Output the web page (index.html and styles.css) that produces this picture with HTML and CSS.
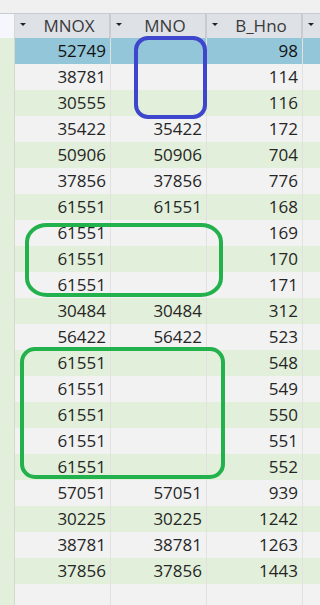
FILE: index.html
```html
<!DOCTYPE html>
<html>
<head>
<meta charset="utf-8">
<link rel="stylesheet" href="styles.css">
</head>
<body>
<div class="sheet">
  <div class="topbar"></div>
  <div class="row head">
    <div class="sel"></div>
    <div class="hc"><span class="arr"></span>MNOX</div>
    <div class="hc"><span class="arr"></span>MNO</div>
    <div class="hc"><span class="arr"></span>B_Hno</div>
    <div class="hc last"><span class="arr"></span></div>
  </div>
  <div class="row cur"><div class="sel"></div><div class="c">52749</div><div class="c"></div><div class="c">98</div><div class="c last"></div></div>
  <div class="row a"><div class="sel"></div><div class="c">38781</div><div class="c"></div><div class="c">114</div><div class="c last"></div></div>
  <div class="row b"><div class="sel"></div><div class="c">30555</div><div class="c"></div><div class="c">116</div><div class="c last"></div></div>
  <div class="row a"><div class="sel"></div><div class="c">35422</div><div class="c">35422</div><div class="c">172</div><div class="c last"></div></div>
  <div class="row b"><div class="sel"></div><div class="c">50906</div><div class="c">50906</div><div class="c">704</div><div class="c last"></div></div>
  <div class="row a"><div class="sel"></div><div class="c">37856</div><div class="c">37856</div><div class="c">776</div><div class="c last"></div></div>
  <div class="row b"><div class="sel"></div><div class="c">61551</div><div class="c">61551</div><div class="c">168</div><div class="c last"></div></div>
  <div class="row a"><div class="sel"></div><div class="c">61551</div><div class="c"></div><div class="c">169</div><div class="c last"></div></div>
  <div class="row b"><div class="sel"></div><div class="c">61551</div><div class="c"></div><div class="c">170</div><div class="c last"></div></div>
  <div class="row a"><div class="sel"></div><div class="c">61551</div><div class="c"></div><div class="c">171</div><div class="c last"></div></div>
  <div class="row b"><div class="sel"></div><div class="c">30484</div><div class="c">30484</div><div class="c">312</div><div class="c last"></div></div>
  <div class="row a"><div class="sel"></div><div class="c">56422</div><div class="c">56422</div><div class="c">523</div><div class="c last"></div></div>
  <div class="row b"><div class="sel"></div><div class="c">61551</div><div class="c"></div><div class="c">548</div><div class="c last"></div></div>
  <div class="row a"><div class="sel"></div><div class="c">61551</div><div class="c"></div><div class="c">549</div><div class="c last"></div></div>
  <div class="row b"><div class="sel"></div><div class="c">61551</div><div class="c"></div><div class="c">550</div><div class="c last"></div></div>
  <div class="row a"><div class="sel"></div><div class="c">61551</div><div class="c"></div><div class="c">551</div><div class="c last"></div></div>
  <div class="row b"><div class="sel"></div><div class="c">61551</div><div class="c"></div><div class="c">552</div><div class="c last"></div></div>
  <div class="row a"><div class="sel"></div><div class="c">57051</div><div class="c">57051</div><div class="c">939</div><div class="c last"></div></div>
  <div class="row b"><div class="sel"></div><div class="c">30225</div><div class="c">30225</div><div class="c">1242</div><div class="c last"></div></div>
  <div class="row a"><div class="sel"></div><div class="c">38781</div><div class="c">38781</div><div class="c">1263</div><div class="c last"></div></div>
  <div class="row b"><div class="sel"></div><div class="c">37856</div><div class="c">37856</div><div class="c">1443</div><div class="c last"></div></div>
  <div class="row a"><div class="sel"></div><div class="c"></div><div class="c"></div><div class="c"></div><div class="c last"></div></div>

  <svg class="marks" width="320" height="605" viewBox="0 0 320 605">
    <rect x="136" y="38" width="69" height="79" rx="12" ry="12" fill="none" stroke="#3d46cc" stroke-width="4"/>
    <rect x="27" y="225" width="194" height="70" rx="20" ry="17" fill="none" stroke="#22b14c" stroke-width="4"/>
    <rect x="22" y="349" width="201" height="128" rx="13" ry="13" fill="none" stroke="#22b14c" stroke-width="4"/>
  </svg>
</div>
</body>
</html>
```
FILE: styles.css
```css
html, body {
  margin: 0;
  padding: 0;
  background: #f2f2f2;
}
.sheet {
  position: relative;
  width: 320px;
  height: 605px;
  overflow: hidden;
  font-family: "Open Sans", "Noto Sans", sans-serif;
  font-size: 17px;
  color: #262626;
}
.topbar {
  height: 13px;
  background: #f0f0f0;
}
.row {
  display: grid;
  grid-template-columns: 15px 96px 96px 96px 1fr;
  height: 26px;
  box-sizing: border-box;
}
.row.head {
  height: 25px;
  background: #dee1e6;
  border-top: 1px solid #c9cbd0;
}
.row.head .sel {
  background: #f6f6fd;
}
.sel {
  background: #e2efda;
  border-right: 1px solid #d4d9d0;
}
.hc {
  position: relative;
  border-right: 2px solid #c9cbd0;
  text-align: center;
  line-height: 23px;
  color: #3a3a3a;
  font-size: 17px;
  padding-left: 14px;
}
.arr {
  position: absolute;
  left: 5px;
  top: 9px;
  width: 0;
  height: 0;
  border-left: 3.5px solid transparent;
  border-right: 3.5px solid transparent;
  border-top: 3.5px solid #222;
}
.c {
  text-align: right;
  padding-right: 4px;
  line-height: 26px;
  border-right: 1px solid #e1e1e1;
  border-bottom: 1px solid #e1e1e1;
  white-space: nowrap;
}
.row .last {
  border-right: none;
}
.row.a .c { background: #f2f2f2; }
.row.b .c { background: #e2efda; }
.row.cur .c { background: #94c6da; color: #111; border-bottom-color: #94c6da; }
.marks {
  position: absolute;
  left: 0;
  top: 0;
  pointer-events: none;
}
```
